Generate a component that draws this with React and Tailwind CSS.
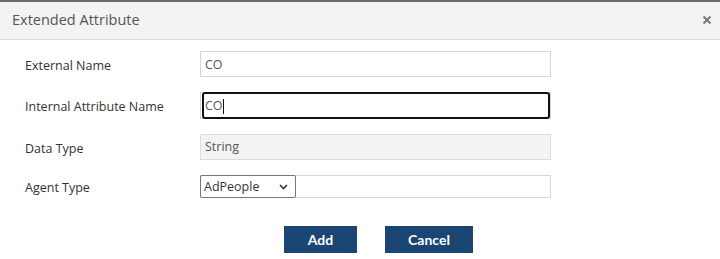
export default function App() {
  const labelCls = "w-[200px] shrink-0 pl-[25px] pt-[4px] text-[12.5px] text-[#333]";
  return (
    <div className="w-[720px] h-[259px] bg-white overflow-hidden" style={{ fontFamily: "'Open Sans', sans-serif" }}>
      <div className="h-[2px] bg-[#6a6a6a]" />
      <div className="h-[38px] bg-[#f3f3f3] border-b border-[#d9d9d9] flex items-center justify-between pl-[12px] pr-[7px] pb-[1px]">
        <span className="text-[14.5px] text-[#555]">Extended Attribute</span>
        <svg width="10" height="10" viewBox="0 0 10 10" className="mr-[1px]">
          <path d="M1.5 1.5 L8.5 8.5 M8.5 1.5 L1.5 8.5" stroke="#777" strokeWidth="2" strokeLinecap="butt" />
        </svg>
      </div>
      <div className="flex flex-col pt-[11px] gap-[15px]">
        <div className="flex items-center h-[26px]">
          <div className={labelCls}>External Name</div>
          <div className="w-[351px] h-[26px] border border-[#d6d6d6] flex items-center pl-[4px] pt-[2px] text-[12.5px] text-[#555]">CO</div>
        </div>
        <div className="flex items-center h-[27px]">
          <div className={labelCls}>Internal Attribute Name</div>
          <div className="w-[351px] h-[27px] border border-[#d6d6d6] flex">
            <div className="flex-1 ml-[1px] -mt-[1px] -mb-[1px] border-2 border-[#111] rounded-[3px] flex items-center pl-[1px] pt-[1px] text-[12.5px] text-[#555]">
              CO<span className="inline-block w-[1px] h-[15px] bg-[#111]" />
            </div>
          </div>
        </div>
        <div className="flex items-center h-[26px]">
          <div className={labelCls}>Data Type</div>
          <div className="w-[351px] h-[26px] border border-[#dcdcdc] bg-[#f3f3f3] flex items-center pl-[4px] pt-[1px] text-[12.5px] text-[#555]">String</div>
        </div>
        <div className="flex items-center h-[23px]">
          <div className={labelCls}>Agent Type</div>
          <div className="w-[351px] h-[23px] border border-[#d6d6d6] flex">
            <div className="w-[96px] -m-[1px] h-[23px] border border-[#767676] rounded-[2px] bg-white flex items-center justify-between pl-[3px] pr-[7px] pt-[1px] text-[12.5px] text-[#333]">
              <span>AdPeople</span>
              <svg width="9" height="6" viewBox="0 0 9 6">
                <path d="M1 1 L4.5 4.5 L8 1" stroke="#333" strokeWidth="1.6" fill="none" />
              </svg>
            </div>
          </div>
        </div>
      </div>
      <div className="flex pl-[284px] gap-[28px] mt-[28px]">
        <div className="w-[73px] h-[27px] bg-[#1b4673] flex items-center justify-center text-white text-[14px] font-bold" style={{ fontFamily: "Lato, sans-serif" }}>Add</div>
        <div className="w-[88px] h-[27px] bg-[#1b4673] flex items-center justify-center text-white text-[14px] font-bold" style={{ fontFamily: "Lato, sans-serif" }}>Cancel</div>
      </div>
    </div>
  );
}
